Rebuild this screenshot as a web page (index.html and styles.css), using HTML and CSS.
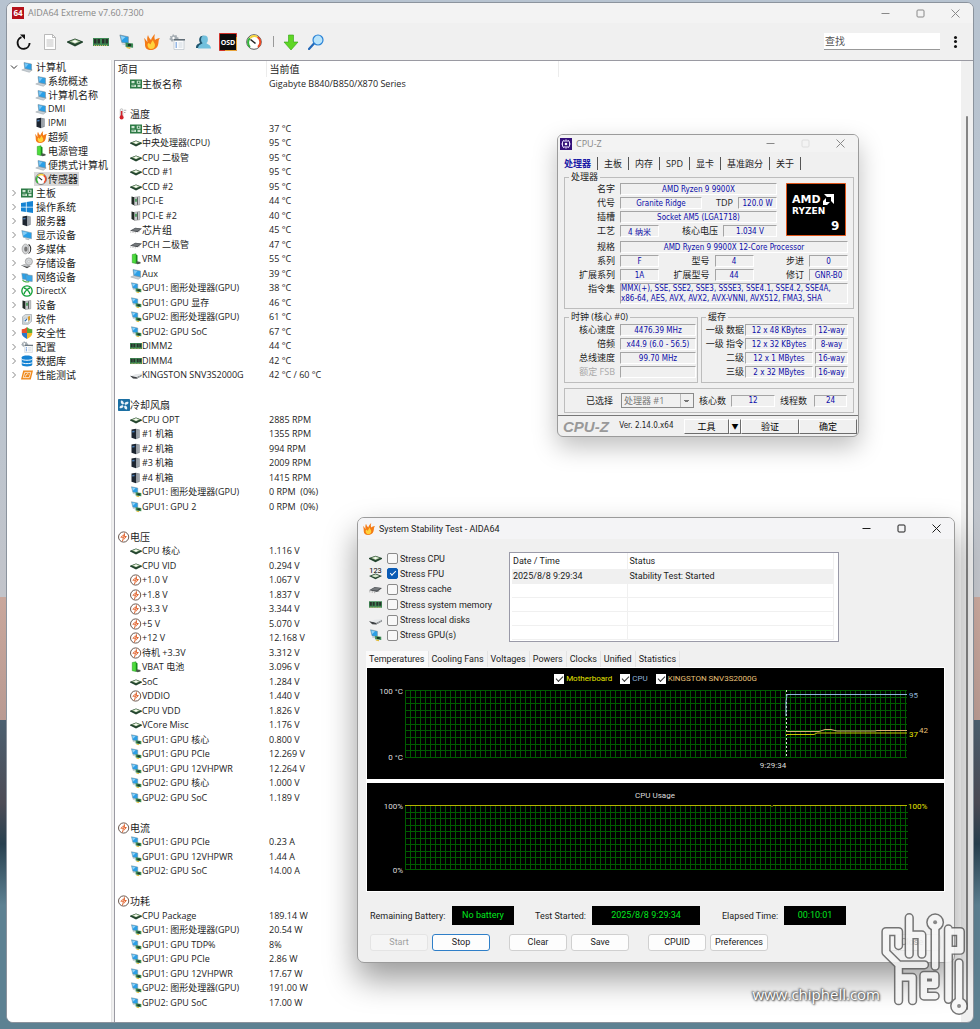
FILE: index.html
```html
<!DOCTYPE html>
<html lang="zh-CN">

<head>
    <meta charset="UTF-8">
    <title>AIDA64 Extreme</title>
    <link rel="stylesheet" href="styles.css">
</head>

<body>
    <!-- icon sprite -->
    <svg class="sprite">
        <symbol id="pc" viewBox="0 0 16 16"><path d="M1 12l5-2 9 2-4 3z" fill="#c9d0d6" stroke="#8c979f" stroke-width=".6" /><path d="M4 2l10 2v8L5 10z" fill="#2b9fe6" stroke="#7b8a94" stroke-width=".7" /><path d="M5 3l5 1-4 5z" fill="#7cc8f5" /></symbol>
        <symbol id="server" viewBox="0 0 16 16"><path d="M2 2l6-1v14l-6-2z" fill="#1d2530" /><path d="M8 1l5 1v11l-5 2z" fill="#8d949b" /><path d="M3 4l3-.5v2L3 6z" fill="#4a7fb8" /><path d="M9.500 3v10M11.500 3v9" stroke="#b9bec3" stroke-width=".7" /></symbol>
        <symbol id="flame" viewBox="0 0 16 16"><path d="M0 4c2 1 2 3 3.500 4C3 6 3 3 4 1c.5 2 2 4 3 5 1-3 2-4 4-6-1 3-.5 4 0 6 1-1 3-2 5-2-2 2-1 4-2 7-1 3.500-4 5-7 5-4 0-6-2-6-5 0-2 0-4-1-7z" fill="#f47b16" /><path d="M4 9c1 0 2 1 2.500 1.500C7 9 8 7 9 6c0 2 2 3 2 5 0 3-2 4-4 4s-3.500-2-3.500-4c0-1 .5-1 .5-2z" fill="#ffd23c" /></symbol>
        <symbol id="battery" viewBox="0 0 16 16"><path d="M3 2l5-1v13l-5-1z" fill="#4ddc3c" stroke="#1c8a1c" stroke-width=".6" /><path d="M8 2l2 1v10l-2 1z" fill="#158a1a" /><path d="M9 11l5 1v2l-4 1-2-1z" fill="#4b5a4c" /></symbol>
        <symbol id="gauge" viewBox="0 0 16 16"><circle cx="8" cy="8" r="7.300" fill="#fff" stroke="#333" stroke-width=".8" /><path d="M4 13A6.200 6.200 0 0 1 4 4" fill="none" stroke="#35b53a" stroke-width="2" /><path d="M4 4a6 6 0 0 1 7.500-1" fill="none" stroke="#f6d43a" stroke-width="2" /><path d="M11.500 3A6.200 6.200 0 0 1 12 13" fill="none" stroke="#ee4a25" stroke-width="2" /><path d="M4.500 5.500l5 4" stroke="#222" stroke-width="1.600" /></symbol>
        <symbol id="board" viewBox="0 0 16 16"><path d="M0 2h16v12H0z" fill="#2c7a45" /><path d="M2 4h4v3H2zM2 9h6v3H2zM10 9h4v3h-4zM9 3.500h5v4H9z" fill="#cfe6d3" /><path d="M10.500 4.500h2v2h-2zM3 10h3v1H3z" fill="#2c7a45" /></symbol>
        <symbol id="windows" viewBox="0 0 16 16"><path d="M0 2.500l6.500-1v6H0zM7.500 1.400L16 0v7.500H7.500zM0 8.500h6.500v6l-6.500-1zM7.500 8.500H16V16l-8.500-1.300z" fill="#1583d3" /></symbol>
        <symbol id="display" viewBox="0 0 16 16"><path d="M1 2l13 3v8L3 11z" fill="#2b9fe6" stroke="#8aa0ac" stroke-width=".8" /><path d="M2 3l7 2-6 4z" fill="#83ccf6" /><path d="M6 12l5 1v2l-5-1z" fill="#b7bec4" /></symbol>
        <symbol id="media" viewBox="0 0 16 16"><ellipse cx="6" cy="8" rx="4.500" ry="6.500" fill="#d4d6d8" stroke="#999" /><ellipse cx="6.500" cy="8" rx="2.300" ry="3.500" fill="#777" /><path d="M10 2c4 2 4 10 0 12" fill="none" stroke="#333" stroke-width="1.400" /></symbol>
        <symbol id="storage" viewBox="0 0 16 16"><circle cx="10.500" cy="6" r="4.800" fill="#d3d6d9" stroke="#999" /><circle cx="10.500" cy="6" r="1.300" fill="#fff" stroke="#999" stroke-width=".5" /><path d="M0 11l5-1 8 2-5 3z" fill="#444" /><path d="M0 11l5-1 8 2-5 1z" fill="#c5c9cc" /></symbol>
        <symbol id="net" viewBox="0 0 16 16"><path d="M1 3l8 1v8l-7-1z" fill="#2b9fe6" stroke="#8aa0ac" stroke-width=".7" /><path d="M6 5l9 1v8l-8-1z" fill="#38a8ea" stroke="#6a8796" stroke-width=".7" /><path d="M2 12c2 3 7 3 9 2" fill="none" stroke="#4bb14a" stroke-width="1.500" /></symbol>
        <symbol id="directx" viewBox="0 0 16 16"><circle cx="8" cy="8" r="6.900" fill="#fff" stroke="#14a03a" stroke-width="1.800" /><path d="M4 12c1-4 6-8 8-8M12 12C11 8 6 4 4 4" fill="none" stroke="#14a03a" stroke-width="1.800" /></symbol>
        <symbol id="device" viewBox="0 0 16 16"><path d="M2 2l4 1v11l-4-2z" fill="#222b26" /><path d="M6 3l7-1v11l-7 1z" fill="#c9cdd0" stroke="#777" stroke-width=".6" /><path d="M7 5h2v4H7z" fill="#2f8f43" /><path d="M10 3v10" stroke="#555" stroke-width="1.200" /></symbol>
        <symbol id="soft" viewBox="0 0 16 16"><path d="M2 5l4-3h8v9l-4 4H2z" fill="#d7dcdf" stroke="#8e979d" stroke-width=".8" /><path d="M4 7h6v6H4z" fill="#fff" stroke="#8e979d" stroke-width=".6" /><path d="M9 5l3-1v5l-2 2z" fill="#d99a2b" /><path d="M5 11l3-3" stroke="#2f6fb0" stroke-width="1.500" /></symbol>
        <symbol id="shield" viewBox="0 0 16 16"><path d="M8 0v8H1V3c3 0 5-1 7-3z" fill="#e8502a" /><path d="M8 0c2 2 4 3 7 3v5H8z" fill="#58a832" /><path d="M1 8h7v8c-4-2-7-4-7-8z" fill="#2a77c9" /><path d="M15 8H8v8c4-2 7-4 7-8z" fill="#f4b92a" /></symbol>
        <symbol id="config" viewBox="0 0 16 16"><path d="M4 0l1.500 1.500L7.500 1l.5 2 2 1-2 2H5L3 8 1.500 6 0 5l1.500-1L1 2l2 .2z" fill="#a5adb3" /><circle cx="4.500" cy="4" r="1.200" fill="#fff" /><path d="M5 6h10v9.500H5z" fill="#fbfcfd" stroke="#b9c2c9" stroke-width=".7" /><path d="M5 5h11v1.500H5z" fill="#5f6b74" /><path d="M6.500 9h1.500M6.500 11h1.500M6.500 13h1.500" stroke="#2f73d0" /><path d="M9.500 9h4M9.500 11h4M9.500 13h4" stroke="#c5ced5" stroke-width=".8" /></symbol>
        <symbol id="db" viewBox="0 0 16 16"><path d="M1 3c0-3 14-3 14 0v10c0 3-14 3-14 0z" fill="#1583d3" /><path d="M1 5.500c2 2 12 2 14 0M1 10c2 2 12 2 14 0" fill="none" stroke="#fff" stroke-width="1.300" /></symbol>
        <symbol id="bench" viewBox="0 0 16 16"><path d="M3 2h13l-3 12H0z" fill="#ef8a1c" /><path d="M5 4.500h8l-2 7H3z" fill="none" stroke="#fff" /><path d="M6 10c1-4 3-4 4-3" fill="none" stroke="#fff" stroke-width="1.200" /></symbol>
        <symbol id="cpu" viewBox="0 0 16 16"><path d="M0 7.500v1l8 4 8-4v-1l-8-3z" fill="#24452f" /><path d="M2.500 7.400L8 5.200l5.500 2.200L8 9.800z" fill="#a9c79a" /><path d="M5 7.400L8 6l3 1.400L8 9z" fill="#fafbf6" /></symbol>
        <symbol id="fpu" viewBox="0 0 16 16"><text x="8" y="7" font-size="9" text-anchor="middle">123</text><path d="M0 11l8-3 8 3-8 4z" fill="#24452f" /><path d="M3 11l5-2 5 2-5 2z" fill="#d5e3cb" /></symbol>
        <symbol id="chip" viewBox="0 0 16 16"><path d="M0 9l7-4 9 1-6 5z" fill="#4c5054" /><path d="M2 8.500L7 5.500l7 .7-4 3z" fill="#74787b" /><path d="M1 10v1.500M4 10v2M7 11v1.500M12 9.500V11" stroke="#888" stroke-width=".8" /></symbol>
        <symbol id="gpu" viewBox="-1 0 17 17"><path d="M1 1l9 2v7L3 9z" fill="#2b9fe6" stroke="#7c8e99" stroke-width=".7" /><path d="M2 2l5 1.200-4 3.500z" fill="#8fd2f8" /><path d="M3 10l4 .5v1.500l-4-1z" fill="#c0c7cc" /><path d="M7 9l8 1v4.500l-8-1z" fill="#3b8a55" /><path d="M9.500 10.500h3.500v2.500H9.500z" fill="#1f3526" /><path d="M8 13.800l4 .6v1.600l-4-1z" fill="#e3b92e" /></symbol>
        <symbol id="ram" viewBox="0 0 16 16"><path d="M0 4h16v8H0z" fill="#3f8a55" /><path d="M1 5h2.500v4.500H1zM4.500 5H7v4.500H4.500zM9 5h2.500v4.500H9zM12.500 5H15v4.500h-2.500z" fill="#28322b" /><path d="M1 11.500h14" stroke="#cdb863" stroke-dasharray="1 1" /></symbol>
        <symbol id="ssd" viewBox="0 0 16 16"><path d="M0 9l4 3.500 5 .5 7-4v-2l-7 3-5-.5z" fill="#3f4245" /><path d="M2 9l5-2 9-1v1.500L9 11z" fill="#e6e8ea" /><path d="M9 11l7-3.500v1.500L9 13z" fill="#a5a9ac" /></symbol>
        <symbol id="thermo" viewBox="0 0 16 16"><rect x="3" y="1" width="3.500" height="10" rx="1.500" fill="#f2f2f2" stroke="#999" stroke-width=".7" /><path d="M4.800 4v8" stroke="#d3222a" stroke-width="2" /><circle cx="4.800" cy="12.500" r="2.700" fill="#d3222a" /><path d="M8 3h3M8 6h2" stroke="#777" stroke-width=".8" /></symbol>
        <symbol id="fan" viewBox="0 0 16 16"><rect width="16" height="16" rx="1" fill="#1b6fa3" /><path d="M8 8C4 7 3 5 4 2c3 0 4 2 4 6zM8 8c1-4 3-5 6-4 0 3-2 4-6 4zM8 8c4 1 5 3 4 6-3 0-4-2-4-6zM8 8c-1 4-3 5-6 4 0-3 2-4 6-4z" fill="#e6f3fa" /><circle cx="8" cy="8" r="1.500" fill="#1b6fa3" /></symbol>
        <symbol id="volt" viewBox="0 0 16 16"><circle cx="7.500" cy="8" r="6.800" fill="#fff" stroke="#5a463d" stroke-width="1.200" /><path d="M9.500 1.500L3 8.500l3.500.5-1.500 5.500L12 7l-3-.5z" fill="#e0561b" /><path d="M8.500 3L5.500 7.500 9 8 6.500 12" fill="none" stroke="#fff" stroke-width=".8" /></symbol>
        <symbol id="reload" viewBox="0 0 16 16"><path d="M5.500 3.200A6 6 0 1 0 13.600 9" fill="none" stroke="#111" stroke-width="1.900" /><path d="M4 .5h5v5z" fill="#111" /></symbol>
        <symbol id="doc" viewBox="0 0 16 16"><path d="M2.500.5h8l3 3v12h-11z" fill="#fff" stroke="#aaa" stroke-width=".8" /><path d="M10.500.5v3h3" fill="none" stroke="#aaa" stroke-width=".8" /><path d="M4.500 6h7M4.500 8h7M4.500 10h7M4.500 12h7" stroke="#bbb" stroke-width=".9" /></symbol>
        <symbol id="user" viewBox="0 0 16 16"><path d="M1 14c0-4 2-4 4-5-2-4 0-8 4-7v12z" fill="#20566f" /><ellipse cx="9.500" cy="5.500" rx="3.400" ry="4" fill="#72c0dd" /><path d="M3 14.500c0-4 4-4 5-6h3c1 2 5 2 5 6z" fill="#72c0dd" /></symbol>
        <symbol id="osd" viewBox="0 0 18 18"><path d="M.5.500h17v17H.5z" fill="#0c0c0c" stroke="#d1322a" /><path d="M17.500 4v13.500H6" fill="none" stroke="#e9a53a" /><text x="9" y="11.500" fill="#fff" font-size="7" font-weight="bold" text-anchor="middle">OSD</text></symbol>
        <symbol id="down" viewBox="0 0 16 16"><path d="M5.500 1h5v7H15l-7 8-7-8h4.500z" fill="#5fd625" stroke="#2fa312" stroke-width=".6" /></symbol>
        <symbol id="find" viewBox="0 0 16 16"><path d="M1 15l5-5.500" stroke="#2469b8" stroke-width="2.200" stroke-linecap="round" /><circle cx="10" cy="6" r="5" fill="#b9e4fb" stroke="#2b83d6" stroke-width="1.200" /></symbol>
        <symbol id="open" viewBox="0 0 8 8"><path d="M1 2.500L4 5.500 7 2.500" fill="none" stroke="#333" /></symbol>
        <symbol id="closed" viewBox="0 0 8 8"><path d="M2.500 1l3 3-3 3" fill="none" stroke="#888" /></symbol>
        <symbol id="w-min" viewBox="0 0 9 9"><path d="M.5 4.500h8" stroke="currentColor" /></symbol>
        <symbol id="w-max" viewBox="0 0 9 9"><rect x="1" y="1" width="7" height="7" rx="1" fill="none" stroke="currentColor" /></symbol>
        <symbol id="w-close" viewBox="0 0 9 9"><path d="M.5.500l8 8M8.500.500l-8 8" stroke="currentColor" /></symbol>
    </svg>

    <main class="window">
        <header class="titlebar">
            <span class="badge64">64</span>
            <h1>AIDA64 Extreme v7.60.7300</h1>
            <div class="controls">
                <button aria-label="最小化"><svg><use href="#w-min" /></svg></button>
                <button aria-label="最大化"><svg><use href="#w-max" /></svg></button>
                <button aria-label="关闭"><svg><use href="#w-close" /></svg></button>
            </div>
        </header>
        <nav class="toolbar">
            <button aria-label="刷新"><svg><use href="#reload" /></svg></button>
            <button aria-label="报告"><svg><use href="#doc" /></svg></button>
            <button aria-label="CPU"><svg><use href="#cpu" /></svg></button>
            <button aria-label="内存"><svg><use href="#ram" /></svg></button>
            <button aria-label="显卡"><svg><use href="#gpu" /></svg></button>
            <button aria-label="稳定性测试"><svg><use href="#flame" /></svg></button>
            <button aria-label="设置"><svg><use href="#config" /></svg></button>
            <button aria-label="用户"><svg><use href="#user" /></svg></button>
            <button aria-label="OSD" class="osd"><svg><use href="#osd" /></svg></button>
            <button aria-label="传感器"><svg><use href="#gauge" /></svg></button>
            <span class="sep"></span>
            <button aria-label="更新"><svg><use href="#down" /></svg></button>
            <button aria-label="搜索"><svg><use href="#find" /></svg></button>
            <input type="text" class="search" placeholder="查找" aria-label="查找">
            <button class="more" aria-label="更多"><i></i><i></i><i></i></button>
        </nav>
        <div class="content">
            <aside class="tree">
                <ul>
                    <li><svg class="arrow"><use href="#open" /></svg><svg><use href="#pc" /></svg>计算机
                        <ul>
                            <li><svg><use href="#pc" /></svg>系统概述</li>
                            <li><svg><use href="#pc" /></svg>计算机名称</li>
                            <li class="en"><svg><use href="#pc" /></svg>DMI</li>
                            <li class="en"><svg><use href="#server" /></svg>IPMI</li>
                            <li><svg><use href="#flame" /></svg>超频</li>
                            <li><svg><use href="#battery" /></svg>电源管理</li>
                            <li><svg><use href="#pc" /></svg>便携式计算机</li>
                            <li class="selected"><svg><use href="#gauge" /></svg>传感器</li>
                        </ul>
                    </li>
                    <li><svg class="arrow"><use href="#closed" /></svg><svg><use href="#board" /></svg>主板</li>
                    <li><svg class="arrow"><use href="#closed" /></svg><svg><use href="#windows" /></svg>操作系统</li>
                    <li><svg class="arrow"><use href="#closed" /></svg><svg><use href="#server" /></svg>服务器</li>
                    <li><svg class="arrow"><use href="#closed" /></svg><svg><use href="#display" /></svg>显示设备</li>
                    <li><svg class="arrow"><use href="#closed" /></svg><svg><use href="#media" /></svg>多媒体</li>
                    <li><svg class="arrow"><use href="#closed" /></svg><svg><use href="#storage" /></svg>存储设备</li>
                    <li><svg class="arrow"><use href="#closed" /></svg><svg><use href="#net" /></svg>网络设备</li>
                    <li class="en"><svg class="arrow"><use href="#closed" /></svg><svg><use href="#directx" /></svg>DirectX</li>
                    <li><svg class="arrow"><use href="#closed" /></svg><svg><use href="#device" /></svg>设备</li>
                    <li><svg class="arrow"><use href="#closed" /></svg><svg><use href="#soft" /></svg>软件</li>
                    <li><svg class="arrow"><use href="#closed" /></svg><svg><use href="#shield" /></svg>安全性</li>
                    <li><svg class="arrow"><use href="#closed" /></svg><svg><use href="#config" /></svg>配置</li>
                    <li><svg class="arrow"><use href="#closed" /></svg><svg><use href="#db" /></svg>数据库</li>
                    <li><svg class="arrow"><use href="#closed" /></svg><svg><use href="#bench" /></svg>性能测试</li>
                </ul>
            </aside>
            <section class="list">
                <table class="sensors">
                    <thead>
                        <tr><th class="name">项目</th><th>当前值</th><th></th></tr>
                    </thead>
                    <tbody>
                        <tr><td class="zh"><svg><use href="#board" /></svg>主板名称</td><td>Gigabyte B840/B850/X870 Series</td></tr>
                        <tr class="gap"><td></td></tr>
                        <tr class="group"><th><svg><use href="#thermo" /></svg>温度</th></tr>
                        <tr><td class="zh"><svg><use href="#board" /></svg>主板</td><td>37 °C</td></tr>
                        <tr><td><svg><use href="#cpu" /></svg>中央处理器(CPU)</td><td>95 °C</td></tr>
                        <tr><td><svg><use href="#cpu" /></svg>CPU 二极管</td><td>95 °C</td></tr>
                        <tr><td><svg><use href="#cpu" /></svg>CCD #1</td><td>95 °C</td></tr>
                        <tr><td><svg><use href="#cpu" /></svg>CCD #2</td><td>95 °C</td></tr>
                        <tr><td><svg><use href="#device" /></svg>PCI-E</td><td>44 °C</td></tr>
                        <tr><td><svg><use href="#device" /></svg>PCI-E #2</td><td>40 °C</td></tr>
                        <tr><td class="zh"><svg><use href="#chip" /></svg>芯片组</td><td>45 °C</td></tr>
                        <tr><td><svg><use href="#chip" /></svg>PCH 二极管</td><td>47 °C</td></tr>
                        <tr><td><svg><use href="#battery" /></svg>VRM</td><td>55 °C</td></tr>
                        <tr><td><svg><use href="#pc" /></svg>Aux</td><td>39 °C</td></tr>
                        <tr><td><svg><use href="#gpu" /></svg>GPU1: 图形处理器(GPU)</td><td>38 °C</td></tr>
                        <tr><td><svg><use href="#gpu" /></svg>GPU1: GPU 显存</td><td>46 °C</td></tr>
                        <tr><td><svg><use href="#gpu" /></svg>GPU2: 图形处理器(GPU)</td><td>61 °C</td></tr>
                        <tr><td><svg><use href="#gpu" /></svg>GPU2: GPU SoC</td><td>67 °C</td></tr>
                        <tr><td><svg><use href="#ram" /></svg>DIMM2</td><td>44 °C</td></tr>
                        <tr><td><svg><use href="#ram" /></svg>DIMM4</td><td>42 °C</td></tr>
                        <tr><td><svg><use href="#ssd" /></svg>KINGSTON SNV3S2000G</td><td>42 °C / 60 °C</td></tr>
                        <tr class="gap"><td></td></tr>
                        <tr class="group"><th><svg><use href="#fan" /></svg>冷却风扇</th></tr>
                        <tr><td><svg><use href="#cpu" /></svg>CPU OPT</td><td>2885 RPM</td></tr>
                        <tr><td><svg><use href="#server" /></svg>#1 机箱</td><td>1355 RPM</td></tr>
                        <tr><td><svg><use href="#server" /></svg>#2 机箱</td><td>994 RPM</td></tr>
                        <tr><td><svg><use href="#server" /></svg>#3 机箱</td><td>2009 RPM</td></tr>
                        <tr><td><svg><use href="#server" /></svg>#4 机箱</td><td>1415 RPM</td></tr>
                        <tr><td><svg><use href="#gpu" /></svg>GPU1: 图形处理器(GPU)</td><td>0 RPM&nbsp; (0%)</td></tr>
                        <tr><td><svg><use href="#gpu" /></svg>GPU1: GPU 2</td><td>0 RPM&nbsp; (0%)</td></tr>
                        <tr class="gap"><td></td></tr>
                        <tr class="group"><th><svg><use href="#volt" /></svg>电压</th></tr>
                        <tr><td><svg><use href="#cpu" /></svg>CPU 核心</td><td>1.116 V</td></tr>
                        <tr><td><svg><use href="#cpu" /></svg>CPU VID</td><td>0.294 V</td></tr>
                        <tr><td><svg><use href="#volt" /></svg>+1.0 V</td><td>1.067 V</td></tr>
                        <tr><td><svg><use href="#volt" /></svg>+1.8 V</td><td>1.837 V</td></tr>
                        <tr><td><svg><use href="#volt" /></svg>+3.3 V</td><td>3.344 V</td></tr>
                        <tr><td><svg><use href="#volt" /></svg>+5 V</td><td>5.070 V</td></tr>
                        <tr><td><svg><use href="#volt" /></svg>+12 V</td><td>12.168 V</td></tr>
                        <tr><td><svg><use href="#volt" /></svg>待机 +3.3V</td><td>3.312 V</td></tr>
                        <tr><td><svg><use href="#battery" /></svg>VBAT 电池</td><td>3.096 V</td></tr>
                        <tr><td><svg><use href="#cpu" /></svg>SoC</td><td>1.284 V</td></tr>
                        <tr><td><svg><use href="#volt" /></svg>VDDIO</td><td>1.440 V</td></tr>
                        <tr><td><svg><use href="#cpu" /></svg>CPU VDD</td><td>1.826 V</td></tr>
                        <tr><td><svg><use href="#cpu" /></svg>VCore Misc</td><td>1.176 V</td></tr>
                        <tr><td><svg><use href="#gpu" /></svg>GPU1: GPU 核心</td><td>0.800 V</td></tr>
                        <tr><td><svg><use href="#gpu" /></svg>GPU1: GPU PCIe</td><td>12.269 V</td></tr>
                        <tr><td><svg><use href="#gpu" /></svg>GPU1: GPU 12VHPWR</td><td>12.264 V</td></tr>
                        <tr><td><svg><use href="#gpu" /></svg>GPU2: GPU 核心</td><td>1.000 V</td></tr>
                        <tr><td><svg><use href="#gpu" /></svg>GPU2: GPU SoC</td><td>1.189 V</td></tr>
                        <tr class="gap"><td></td></tr>
                        <tr class="group"><th><svg><use href="#volt" /></svg>电流</th></tr>
                        <tr><td><svg><use href="#gpu" /></svg>GPU1: GPU PCIe</td><td>0.23 A</td></tr>
                        <tr><td><svg><use href="#gpu" /></svg>GPU1: GPU 12VHPWR</td><td>1.44 A</td></tr>
                        <tr><td><svg><use href="#gpu" /></svg>GPU2: GPU SoC</td><td>14.00 A</td></tr>
                        <tr class="gap"><td></td></tr>
                        <tr class="group"><th><svg><use href="#volt" /></svg>功耗</th></tr>
                        <tr><td><svg><use href="#cpu" /></svg>CPU Package</td><td>189.14 W</td></tr>
                        <tr><td><svg><use href="#gpu" /></svg>GPU1: 图形处理器(GPU)</td><td>20.54 W</td></tr>
                        <tr><td><svg><use href="#gpu" /></svg>GPU1: GPU TDP%</td><td>8%</td></tr>
                        <tr><td><svg><use href="#gpu" /></svg>GPU1: GPU PCIe</td><td>2.86 W</td></tr>
                        <tr><td><svg><use href="#gpu" /></svg>GPU1: GPU 12VHPWR</td><td>17.67 W</td></tr>
                        <tr><td><svg><use href="#gpu" /></svg>GPU2: 图形处理器(GPU)</td><td>191.00 W</td></tr>
                        <tr><td><svg><use href="#gpu" /></svg>GPU2: GPU SoC</td><td>17.00 W</td></tr>
                    </tbody>
                </table>
            </section>
            <div class="scroll"><div class="thumb"></div></div>
        </div>
    </main>

    <!-- CPU-Z -->
    <section class="cpuz">
        <header class="titlebar">
            <svg class="logo" viewBox="0 0 12 12"><path d="M0 0h12v12H0z" fill="#34107a" /><path d="M6 1v10M1 6h10M3.500 2v8M8.500 2v8" stroke="#cbbcf0" stroke-width=".8" /><rect x="2.500" y="3" width="7" height="6" rx="1" fill="#34107a" stroke="#e8e0ff" /><circle cx="6" cy="6" r="1.300" fill="#fff" /></svg>
            <h2>CPU-Z</h2>
            <div class="controls">
                <button aria-label="最小化"><svg><use href="#w-min" /></svg></button>
                <button aria-label="最大化" disabled><svg><use href="#w-max" /></svg></button>
                <button aria-label="关闭"><svg><use href="#w-close" /></svg></button>
            </div>
        </header>
        <nav class="z-tabs">
            <button class="active">处理器</button><button>主板</button><button>内存</button><button>SPD</button><button>显卡</button><button>基准跑分</button><button>关于</button>
        </nav>
        <div class="z-page">
            <fieldset>
                <legend>处理器</legend>
                <div class="z-top">
                    <div class="z-rows">
                        <div class="z-row"><label for="z1">名字</label><input id="z1" class="wide" readonly value="AMD Ryzen 9 9900X"></div>
                        <div class="z-row"><label for="z2">代号</label><input id="z2" class="w82" readonly value="Granite Ridge"><label for="z3" class="mid">TDP</label><input id="z3" readonly value="120.0 W"></div>
                        <div class="z-row"><label for="z4">插槽</label><input id="z4" class="wide" readonly value="Socket AM5 (LGA1718)"></div>
                        <div class="z-row"><label for="z5">工艺</label><input id="z5" readonly value="4 纳米"><label for="z6" class="mid">核心电压</label><input id="z6" class="w54" readonly value="1.034 V"></div>
                    </div>
                    <svg class="ryzen" viewBox="0 0 60 53"><path d="M.5.500h59v52H.5z" fill="#000" stroke="#e0561b" /><text x="6" y="20" class="amd">AMD</text><path d="M38 11h10v10l-3-3v-4h-4z" fill="#fff" /><path d="M40 15l-3 3v4h4l3-3h-4z" fill="#fff" /><text x="6" y="31" class="rz">RYZEN</text><text x="45" y="47" class="nine">9</text></svg>
                </div>
                <div class="z-rows">
                    <div class="z-row"><label for="z7">规格</label><input id="z7" class="wide" readonly value="AMD Ryzen 9 9900X 12-Core Processor"></div>
                    <div class="z-row"><label for="z8">系列</label><input id="z8" readonly value="F"><label for="z9" class="mid">型号</label><input id="z9" readonly value="4"><label for="z10" class="mid">步进</label><input id="z10" readonly value="0"></div>
                    <div class="z-row"><label for="z11">扩展系列</label><input id="z11" readonly value="1A"><label for="z12" class="mid">扩展型号</label><input id="z12" readonly value="44"><label for="z13" class="mid">修订</label><input id="z13" readonly value="GNR-B0"></div>
                    <div class="z-row"><label for="z14">指令集</label><textarea id="z14" class="wide" readonly>MMX(+), SSE, SSE2, SSE3, SSSE3, SSE4.1, SSE4.2, SSE4A,
x86-64, AES, AVX, AVX2, AVX-VNNI, AVX512, FMA3, SHA</textarea></div>
                </div>
            </fieldset>
            <div class="z-pair">
                <fieldset class="clocks">
                    <legend>时钟 (核心 #0)</legend>
                    <div class="z-rows">
                        <div class="z-row"><label for="c1">核心速度</label><input id="c1" class="wide" readonly value="4476.39 MHz"></div>
                        <div class="z-row"><label for="c2">倍频</label><input id="c2" class="wide" readonly value="x44.9 (6.0 - 56.5)"></div>
                        <div class="z-row"><label for="c3">总线速度</label><input id="c3" class="wide" readonly value="99.70 MHz"></div>
                        <div class="z-row off"><label for="c4">额定 FSB</label><input id="c4" class="wide" disabled></div>
                    </div>
                </fieldset>
                <fieldset class="cache">
                    <legend>缓存</legend>
                    <div class="z-rows">
                        <div class="z-row"><label for="k1">一级 数据</label><input id="k1" class="wide" readonly value="12 x 48 KBytes"><input class="way" aria-label="一级 数据 路数" readonly value="12-way"></div>
                        <div class="z-row"><label for="k2">一级 指令</label><input id="k2" class="wide" readonly value="12 x 32 KBytes"><input class="way" aria-label="一级 指令 路数" readonly value="8-way"></div>
                        <div class="z-row"><label for="k3">二级</label><input id="k3" class="wide" readonly value="12 x 1 MBytes"><input class="way" aria-label="二级 路数" readonly value="16-way"></div>
                        <div class="z-row"><label for="k4">三级</label><input id="k4" class="wide" readonly value="2 x 32 MBytes"><input class="way" aria-label="三级 路数" readonly value="16-way"></div>
                    </div>
                </fieldset>
            </div>
            <div class="z-select">
                <label for="s1">已选择</label>
                <select id="s1" disabled><option>处理器 #1</option></select>
                <label for="s2">核心数</label><input id="s2" class="wide" readonly value="12">
                <label for="s3">线程数</label><input id="s3" class="way" readonly value="24">
            </div>
        </div>
        <footer class="z-foot">
            <strong>CPU-Z</strong>
            <span>Ver. 2.14.0.x64</span>
            <button>工具</button><button class="drop" aria-label="展开">▼</button><button>验证</button><button>确定</button>
        </footer>
    </section>

    <!-- stability test -->
    <section class="stability">
        <header class="titlebar">
            <svg class="logo"><use href="#flame" /></svg>
            <h2>System Stability Test - AIDA64</h2>
            <div class="controls">
                <button aria-label="最小化"><svg><use href="#w-min" /></svg></button>
                <button aria-label="最大化"><svg><use href="#w-max" /></svg></button>
                <button aria-label="关闭"><svg><use href="#w-close" /></svg></button>
            </div>
        </header>
        <div class="setup">
            <div class="tests">
                <label><svg><use href="#cpu" /></svg><input type="checkbox">Stress CPU</label>
                <label><svg><use href="#fpu" /></svg><input type="checkbox" checked>Stress FPU</label>
                <label><svg><use href="#chip" /></svg><input type="checkbox">Stress cache</label>
                <label><svg><use href="#ram" /></svg><input type="checkbox">Stress system memory</label>
                <label><svg><use href="#ssd" /></svg><input type="checkbox">Stress local disks</label>
                <label><svg><use href="#gpu" /></svg><input type="checkbox">Stress GPU(s)</label>
            </div>
            <div class="log">
                <table>
                    <thead>
                        <tr><th class="when">Date / Time</th><th>Status</th></tr>
                    </thead>
                    <tbody>
                        <tr class="picked"><td>2025/8/8 9:29:34</td><td>Stability Test: Started</td></tr>
                        <tr><td></td><td></td></tr>
                        <tr><td></td><td></td></tr>
                        <tr><td></td><td></td></tr>
                        <tr><td></td><td></td></tr>
                    </tbody>
                </table>
            </div>
        </div>
        <nav class="s-tabs">
            <button class="active">Temperatures</button><button>Cooling Fans</button><button>Voltages</button><button>Powers</button><button>Clocks</button><button>Unified</button><button>Statistics</button>
        </nav>
        <div class="charts">
            <div class="chart">
                <div class="legend">
                    <label class="yellow"><input type="checkbox" checked>Motherboard</label>
                    <label class="blue"><input type="checkbox" checked>CPU</label>
                    <label class="sand"><input type="checkbox" checked>KINGSTON SNV3S2000G</label>
                </div>
                <svg viewBox="0 0 577 93">
                    <defs>
                        <pattern id="cols" width="5" height="100" x="38" patternUnits="userSpaceOnUse"><path d="M0 0h1v100H0z" fill="#005c00" /></pattern>
                    </defs>
                    <path d="M38 4h502v67H38z" fill="url(#cols)" />
                    <path class="rows" d="M38 4.500h502M38 11.500h502M38 17.500h502M38 24.500h502M38 31.500h502M38 38.500h502M38 44.500h502M38 51.500h502M38 58.500h502M38 64.500h502M38 71.500h502" />
                    <path d="M419.500 4v67" stroke="#ddd" stroke-dasharray="2 2" />
                    <path d="M419 30v-14l1-7.500h120" fill="none" stroke="#8fb4d8" />
                    <path d="M419 45.500h33l6-2h6l6 1.500h38l2-.5h30" fill="none" stroke="#d8b070" />
                    <path d="M419 48.500h28l3-1.500h90" fill="none" stroke="#c8c800" />
                    <text x="36" y="8" text-anchor="end">100 °C</text>
                    <text x="36" y="74" text-anchor="end">0 °C</text>
                    <text x="406" y="82" text-anchor="middle">9:29:34</text>
                    <text x="542" y="12" class="blue">95</text>
                    <text x="542" y="51" class="yellow">37</text>
                    <text x="552" y="47" class="sand">42</text>
                </svg>
            </div>
            <div class="chart">
                <svg viewBox="0 0 577 108">
                    <path d="M38 22h503v65H38z" fill="url(#cols)" />
                    <path class="rows" d="M38 29.500h503M38 35.500h503M38 42.500h503M38 48.500h503M38 55.500h503M38 61.500h503M38 68.500h503M38 74.500h503M38 81.500h503M38 86.500h503" />
                    <path d="M38 22.500h366l1 1 1-1h134" fill="none" stroke="#b4b400" />
                    <text x="288" y="15" text-anchor="middle">CPU Usage</text>
                    <text x="36" y="26" text-anchor="end">100%</text>
                    <text x="36" y="90" text-anchor="end">0%</text>
                    <text x="541" y="26" class="yellow">100%</text>
                </svg>
            </div>
        </div>
        <div class="status">
            <span class="l1">Remaining Battery:</span><output class="o1">No battery</output>
            <span class="l2">Test Started:</span><output class="o2">2025/8/8 9:29:34</output>
            <span class="l3">Elapsed Time:</span><output class="o1">00:10:01</output>
        </div>
        <div class="actions">
            <div><button disabled>Start</button><button class="focus">Stop</button></div>
            <div><button>Clear</button><button>Save</button></div>
            <div><button>CPUID</button><button>Preferences</button></div>
            <div class="end"><button disabled>Close</button></div>
        </div>
    </section>

    <!-- watermark -->
    <div class="watermark">
        <a href="#">www.chiphell.com</a>
        <svg viewBox="720 400 265 310">
            <g class="edge">
                <path d="M776 498v-42h-38v62l38 38h78M776 556v108M776 594h42v70M808 414v110M808 466h38v58M886 446v114M926 448v212M926 456h36v56h-36M886 650h-34v-62h34v28h-24M958 550v116" />
                <circle cx="886" cy="428" r="13" />
                <circle cx="958" cy="680" r="13" />
            </g>
            <g class="face">
                <path d="M776 498v-42h-38v62l38 38h78M776 556v108M776 594h42v70M808 414v110M808 466h38v58M886 446v114M926 448v212M926 456h36v56h-36M886 650h-34v-62h34v28h-24M958 550v116" />
                <circle cx="886" cy="428" r="13" />
                <circle cx="958" cy="680" r="13" />
            </g>
            <circle cx="886" cy="428" r="6" fill="#777" />
            <circle cx="958" cy="680" r="6" fill="#777" />
        </svg>
    </div>
</body>

</html>
```

FILE: styles.css
```css
* {
    box-sizing: border-box;
}

body {
    margin: 0;
    padding: 2px 6px 6px;
    min-height: 100vh;
    display: flex;
    position: relative;
    font: 9px/14px "Open Sans", "Noto Sans CJK SC", sans-serif;
    color: #1c1c1c;
    background: linear-gradient(#b7c3d0, #bcc5cf 40%, #c2c4ca 58%, #c9a79c 58%, #b99a92 70%, #4c6070 70%, #4d4c56 78%, #28404f 82%, #5d8192 88%, #5d8192);
}

button,
input,
select,
textarea {
    font: inherit;
    color: inherit;
    margin: 0;
    padding: 0;
}

button {
    border: 0;
    background: none;
}

h1,
h2 {
    margin: 0;
    font-size: 9px;
    font-weight: normal;
}

.sprite {
    display: none;
}

.window {
    flex: 1;
    display: flex;
    flex-direction: column;
    background: #f0f0f0;
    border: 1px solid #8b939d;
    border-radius: 7px;
    overflow: hidden;
}

/* title bars */
.titlebar {
    display: flex;
    align-items: center;
    height: 20px;
    padding-left: 5px;
    background: #f3f3f3;
    color: #888;
}

.badge64 {
    width: 12px;
    height: 12px;
    margin-right: 4px;
    background: #b5121b;
    color: #fff;
    font-size: 8px;
    font-weight: bold;
    line-height: 12px;
    text-align: center;
}

.titlebar .logo {
    width: 12px;
    height: 12px;
    margin-right: 4px;
}

.controls {
    display: flex;
    margin-left: auto;
}

.controls button {
    display: flex;
    align-items: center;
    justify-content: center;
    width: 35px;
    height: 18px;
}

.controls svg {
    width: 9px;
    height: 9px;
}

.controls button:disabled {
    color: #ddd;
}

/* toolbar */
.toolbar {
    display: flex;
    align-items: center;
    height: 37px;
    padding: 0 16px 0 9px;
}

.toolbar button {
    display: flex;
    width: 16px;
    height: 18px;
    margin-right: 10px;
    align-items: center;
    justify-content: center;
}

.toolbar button:nth-child(even) {
    margin-right: 9px;
}

.toolbar button svg {
    flex: none;
    width: 16px;
    height: 16px;
}

.toolbar .osd svg {
    width: 18px;
    height: 18px;
}

.toolbar .sep {
    width: 1px;
    height: 11px;
    margin: 0 9px 0 2px;
    background: #999;
}

.toolbar .search {
    width: 116px;
    height: 17px;
    margin-left: auto;
    padding: 0 1px;
    border: 0;
    border-bottom: 1px solid #999;
    background: #fff;
    font-size: 10px;
}

.search::placeholder {
    color: #555;
}

.toolbar .more {
    flex-direction: column;
    justify-content: space-between;
    width: 3px;
    height: 12px;
    margin: 0 0 0 14px;
}

.more i {
    width: 3px;
    height: 3px;
    border-radius: 2px;
    background: #111;
}

.content {
    flex: 1;
    display: flex;
}

/* tree */
.tree {
    width: 105px;
    background: #fff;
    border-right: 1px solid #e4e4e4;
    font-size: 10px;
}

.tree ul {
    margin: 0;
    padding: 0;
    list-style: none;
}

.tree li {
    padding-left: 3px;
    white-space: nowrap;
}

.tree svg {
    width: 12px;
    height: 12px;
    margin: 1px 3px 0 0;
    vertical-align: top;
}

.tree .arrow {
    width: 8px;
    height: 8px;
    margin: 3px 3px 0 0;
}

.tree li li {
    width: max-content;
    margin-left: 24px;
    padding: 0 1px;
}

.tree li li svg {
    margin-right: 1px;
}

.tree .en {
    font-size: 9px;
}

.tree .selected {
    background: #d9d9d9;
}

/* sensor list */
.list {
    flex: 1;
    margin-left: 2px;
    background: #fff;
    border: 1px solid #9a9aa2;
    border-width: 1px 0 0 1px;
}

.sensors {
    border-collapse: collapse;
}

.sensors th,
.sensors td {
    height: 14px;
    padding: 0 0 0 3px;
    font-weight: normal;
    text-align: left;
    white-space: nowrap;
}

.sensors thead th {
    height: 16px;
    min-width: 292px;
    font-size: 10px;
    border-right: 1px solid #ececec;
}

.sensors thead .name {
    min-width: 151px;
}

.sensors thead th:last-child {
    min-width: 0;
    border: 0;
}

.sensors td:first-child {
    padding-left: 15px;
}

.sensors tr:nth-child(even) td {
    height: 15px;
}

.sensors .gap td,
.sensors .gap:nth-child(even) td {
    height: 16px;
}

.sensors .zh,
.sensors .group th {
    font-size: 10px;
}

.sensors svg {
    width: 12px;
    height: 12px;
    margin-top: 1px;
    vertical-align: top;
}

.scroll {
    display: flex;
    justify-content: center;
    width: 12px;
    padding: 55px 0 12px;
    border-top: 1px solid #9a9aa2;
}

.thumb {
    width: 2px;
    border-radius: 1px;
    background: #858585;
}

/* CPU-Z */
.cpuz {
    position: absolute;
    left: 557px;
    top: 134px;
    width: 302px;
    background: #f0f0f0;
    border: 1px solid #9b9b9b;
    border-radius: 6px;
    box-shadow: 0 10px 24px rgba(0, 0, 0, .25);
    overflow: hidden;
}

.cpuz .titlebar {
    height: 17px;
    padding-left: 2px;
}

.z-tabs {
    display: flex;
    height: 19px;
    padding: 5px 0 1px;
}

.z-tabs button {
    padding: 0 6px;
    border-right: 1px solid #555;
    line-height: 13px;
}

.z-tabs .active {
    color: #1a1aa6;
    font-weight: bold;
}

.z-page {
    padding: 0 4px 2px 6px;
    border-bottom: 1px solid #777;
    line-height: 12px;
}

.cpuz fieldset {
    min-width: 0;
    margin: 0;
    padding: 0 5px 4px 0;
    border: 1px solid #bdbdbd;
}

.cpuz legend {
    height: 12px;
    margin-left: 4px;
    padding: 0 2px;
}

.z-top {
    display: flex;
    justify-content: space-between;
    margin-bottom: 4px;
    padding-right: 2px;
}

.z-top .z-rows {
    width: 212px;
}

.z-rows {
    display: flex;
    flex-direction: column;
    gap: 2px;
}

.z-row {
    display: flex;
    min-height: 12px;
}

.z-row label {
    width: 50px;
    margin-right: 5px;
    text-align: right;
    white-space: nowrap;
}

.z-row .mid {
    flex: 1;
    width: auto;
}

.cpuz input,
.cpuz textarea {
    width: 39px;
    height: 12px;
    border: 1px solid #a5a5a5;
    border-color: #a5a5a5 #fff #fff #a5a5a5;
    border-radius: 0;
    background: #f0f0f0;
    color: #0c0ca8;
    font: 8px/10px "DejaVu Sans Condensed", "Open Sans", "Noto Sans CJK SC", sans-serif;
    text-align: center;
}

.cpuz .wide {
    flex: 1;
    min-width: 0;
}

.cpuz .w82 {
    width: 82px;
}

.cpuz .w54 {
    width: 54px;
}

.cpuz .way {
    width: 33px;
    margin-left: 2px;
}

.cpuz textarea {
    display: block;
    height: 21px;
    resize: none;
    overflow: hidden;
    text-align: left;
    white-space: pre;
}

.ryzen {
    width: 60px;
    height: 53px;
}

.ryzen text {
    fill: #fff;
    font-family: "DejaVu Sans", sans-serif;
    font-weight: bold;
}

.amd {
    font-size: 11px;
}

.rz {
    font-size: 9px;
}

.nine {
    font-size: 12px;
}

.z-pair {
    display: flex;
    gap: 3px;
    margin: 2px 0 5px;
}

.z-pair .clocks {
    width: 134px;
    padding-right: 1px;
}

.z-pair .cache {
    flex: 1;
}

.z-pair .z-rows {
    padding: 1px 0 0;
}

.cache .z-row label {
    width: 42px;
    margin-right: 1px;
}

.off {
    color: #a9a9a9;
}

.z-select {
    display: flex;
    align-items: center;
    gap: 5px;
    height: 25px;
    padding: 0 6px 0 21px;
    border: 1px solid #bdbdbd;
}

.z-select select {
    appearance: none;
    width: 73px;
    height: 15px;
    margin-left: 3px;
    padding-left: 2px;
    border: 1px solid #8a8a8a;
    border-radius: 0;
    background:
        linear-gradient(45deg, transparent 50%, #777 50%) right 6px top 6px / 3px 3px no-repeat,
        linear-gradient(-45deg, transparent 50%, #777 50%) right 3px top 6px / 3px 3px no-repeat,
        linear-gradient(#bbb, #bbb) right 12px top 0 / 1px 13px no-repeat,
        #f0f0f0;
    color: #777;
    opacity: 1;
}

.z-foot {
    display: flex;
    align-items: center;
    height: 20px;
    padding: 0 1px 0 5px;
}

.z-foot strong {
    color: #999;
    font: italic bold 15px "Liberation Sans", sans-serif;
}

.z-foot span {
    margin: 0 auto;
    font: 8px/14px "DejaVu Sans Condensed", "Open Sans", sans-serif;
}

.z-foot button {
    width: 58px;
    height: 15px;
    border: 1px solid #fff;
    border-color: #fff #6d6d6d #6d6d6d #fff;
    background: #f0f0f0;
    line-height: 13px;
    color: #000;
}

.z-foot span + button {
    width: 45px;
}

.z-foot .drop {
    width: 12px;
    font-size: 7px;
}

/* stability test */
.stability {
    position: absolute;
    left: 357px;
    top: 517px;
    width: 598px;
    background: #f0f0f0;
    border: 1px solid #9b9b9b;
    border-radius: 7px;
    box-shadow: 0 16px 32px rgba(0, 0, 0, .4);
    font-family: Roboto, "Open Sans", sans-serif;
    overflow: hidden;
}

.stability .titlebar {
    height: 21px;
    color: #1c1c1c;
    background: #f4f4f6;
}

.setup {
    display: flex;
    padding: 13px 11px 0;
}

.tests {
    display: flex;
    flex-direction: column;
    justify-content: space-between;
    width: 140px;
}

.tests label {
    display: flex;
    align-items: center;
    height: 13px;
}

.tests svg {
    width: 13px;
    height: 13px;
    margin-right: 5px;
}

.stability input {
    appearance: none;
    width: 11px;
    height: 11px;
    margin-right: 2px;
    border: 1px solid #8a8a8a;
    border-radius: 2px;
    background: #f8f8f8;
}

.tests input:checked {
    border-color: #0a5bb5;
    background: #0a5bb5;
}

.stability input:checked::before {
    content: "";
    display: block;
    width: 5px;
    height: 2px;
    margin: 2px 0 0 2px;
    border: 1px solid #fff;
    border-width: 0 0 1px 1px;
    transform: rotate(-45deg);
}

.log {
    width: 330px;
    height: 90px;
    padding: 0 4px 0 2px;
    background: #fff;
    border: 1px solid #9a9aa8;
}

.log table {
    width: 100%;
    border-collapse: collapse;
}

.log th,
.log td {
    height: 15px;
    padding: 0 0 0 1px;
    border: 1px solid #f0f0f0;
    border-width: 0 1px 1px 0;
    font-weight: normal;
    text-align: left;
}

.log th {
    height: 16px;
}

.log tbody td {
    line-height: 13px;
    height: 14px;
}

.log td + td,
.log th + th {
    padding-left: 2px;
}

.log .when {
    width: 115px;
}

.picked {
    background: #f0f0f0;
}

.s-tabs {
    display: flex;
    margin: 9px 0 0 8px;
}

.s-tabs button {
    height: 16px;
    padding: 0 3px;
    border-right: 1px solid #e4e4e4;
    background: #f2f2f2;
}

.s-tabs .active {
    background: #fafafa;
}

.charts {
    display: flex;
    flex-direction: column;
    gap: 4px;
    margin: 0 9px 0 8px;
    padding: 1px;
    background: #fff;
}

.chart {
    background: #000;
    color: #ddd;
    font-size: 8px;
}

.chart svg {
    display: block;
    width: 100%;
}

.chart text {
    fill: #ddd;
}

.rows {
    stroke: #005c00;
}

.legend {
    display: flex;
    justify-content: center;
    gap: 8px;
    padding-top: 4px;
}

.legend label {
    display: flex;
    align-items: center;
}

.stability .legend input {
    width: 10px;
    height: 10px;
    border: 0;
    border-radius: 0;
    background: #fff;
}

.stability .legend input:checked::before {
    width: 6px;
    height: 3px;
    border-color: #333;
}

.yellow,
.chart text.yellow {
    color: #e6e600;
    fill: #e6e600;
}

.blue,
.chart text.blue {
    color: #8fb4d8;
    fill: #8fb4d8;
}

.sand,
.chart text.sand {
    color: #e8c078;
    fill: #e8c078;
}

.status {
    display: flex;
    align-items: center;
    padding: 14px 12px 9px;
}

.status output {
    height: 19px;
    background: #000;
    color: #00e61e;
    line-height: 19px;
    text-align: center;
}

.l1 {
    width: 82px;
}

.l2 {
    width: 57px;
    margin-left: 21px;
}

.l3 {
    width: 62px;
    margin-left: 22px;
}

.o1 {
    width: 62px;
}

.o2 {
    width: 108px;
}

.actions {
    display: flex;
    gap: 19px;
    padding: 0 13px 11px 12px;
}

.actions div {
    display: flex;
    gap: 4px;
}

.actions .end {
    margin-left: auto;
}

.actions button {
    width: 58px;
    height: 17px;
    border: 1px solid #d0d0d0;
    border-radius: 3px;
    background: #fdfdfd;
    line-height: 15px;
}

.actions button:disabled {
    background: #f5f5f5;
    border-color: #e4e4e4;
    color: #a0a0a0;
}

.actions .focus {
    border-color: #2f7fc8;
}

/* watermark */
.watermark {
    position: absolute;
    right: 12px;
    bottom: 13px;
    display: flex;
    align-items: flex-end;
}

.watermark a {
    margin-bottom: 12px;
    color: #fff;
    font-size: 15px;
    line-height: 20px;
    text-decoration: none;
    text-shadow: 0 0 2px #444, 1px 1px 2px #444, -1px -1px 2px #666;
}

.watermark svg {
    width: 88px;
    height: 103px;
    opacity: .85;
}

.edge,
.face {
    fill: none;
    stroke: #5f5f5f;
    stroke-width: 28px;
    stroke-linejoin: round;
    stroke-linecap: round;
}

.face {
    stroke: #f6f6f6;
    stroke-width: 19px;
}
```
